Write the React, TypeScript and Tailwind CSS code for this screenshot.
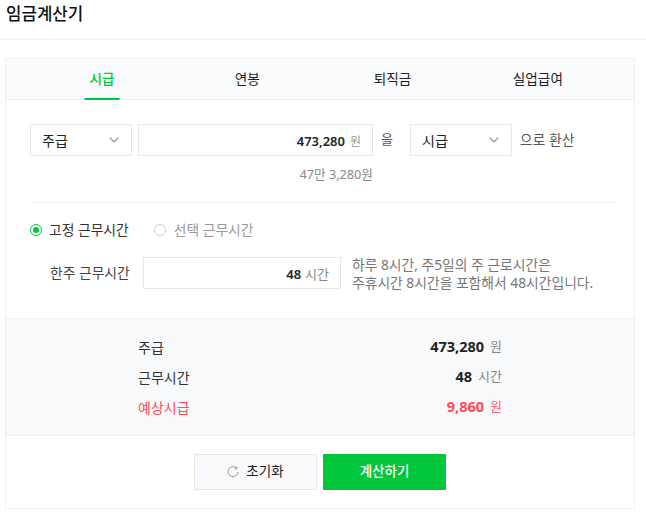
import React from 'react';

const font = 'font-["Noto_Sans","Noto_Sans_CJK_KR",sans-serif]';

const Chevron: React.FC = () => (
  <svg width="10" height="6" viewBox="0 0 10 6" fill="none" stroke="#8b8b8b" strokeWidth="1.2">
    <path d="M0.8 0.6 L5 4.8 L9.2 0.6" />
  </svg>
);

const SelectBox: React.FC<{ label: string }> = ({ label }) => (
  <div className="flex h-8 w-[102px] shrink-0 items-center justify-between border border-[#e4e7ec] bg-white pl-[11px] pr-3">
    <span className="text-[14px] text-[#222]">{label}</span>
    <Chevron />
  </div>
);

const tabs = ['시급', '연봉', '퇴직금', '실업급여'];

const SummaryRow: React.FC<{ label: string; value: string; unit: string; red?: boolean }> = ({ label, value, unit, red }) => (
  <div className="flex h-[30px] items-center justify-between">
    <span className={`mt-[2px] text-[14px] ${red ? 'text-[#ff4b55]' : 'text-[#333]'}`}>{label}</span>
    <span className="mt-[1px] flex items-center gap-[6px]">
      <b className={`text-[14.5px] font-bold ${red ? 'text-[#ff4b55]' : 'text-[#222]'}`}>{value}</b>
      <span className={`text-[13px] ${red ? 'text-[#ff6a72]' : 'text-[#888]'}`}>{unit}</span>
    </span>
  </div>
);

export default function App() {
  return (
    <div className={`${font} h-[517px] w-[646px] overflow-hidden bg-white`}>
      <div className="flex h-10 items-start border-b border-[#f0f0f0] pl-[6px] pt-[2px]">
        <h1 className="text-[16.8px] font-medium leading-6 text-[#111]">임금계산기</h1>
      </div>

      <div className="ml-[5px] mt-[18px] w-[630px] border border-[#eef0f3]">
        {/* tabs */}
        <div className="grid h-[41px] grid-cols-4 border-b border-[#e9ecf0] bg-[#fafbfd] pl-[23px] pr-6">
          {tabs.map((t, i) => (
            <div key={t} className="relative flex items-center justify-center pl-[1px] pt-[1px]">
              <span className={`text-[13.6px] ${i === 0 ? 'font-medium text-[#00c73c]' : 'text-[#222]'}`}>{t}</span>
              {i === 0 && <span className="absolute bottom-[-1px] left-1/2 h-[2px] w-[35px] -translate-x-1/2 bg-[#00c73c]" />}
            </div>
          ))}
        </div>

        {/* conversion form */}
        <div className="pl-6 pr-5 pt-6">
          <div className="flex items-center">
            <SelectBox label="주급" />
            <div className="ml-[6px] flex h-8 w-[235px] items-center justify-end border border-[#e4e7ec] pr-[11px] pt-[3px]">
              <b className="text-[13px] font-semibold text-[#222]">473,280</b>
              <span className="ml-[5px] text-[12px] text-[#999]">원</span>
            </div>
            <span className="ml-2 w-[29px] text-[13px] text-[#555]">을</span>
            <SelectBox label="시급" />
            <span className="ml-2 text-[13.5px] tracking-[0.3px] text-[#555]">으로 환산</span>
          </div>
          <div className="ml-[108px] mt-[8px] w-[235px] text-right text-[12.7px] leading-5 text-[#888]">47만 3,280원</div>
          <div className="mt-[18px] border-t border-[#f0f1f3]" />

          {/* working hours */}
          <div className="mt-[16px] flex h-[22px] items-center">
            <span className="flex h-3 w-3 items-center justify-center rounded-full border-[1.5px] border-[#00c73c]">
              <span className="h-[6px] w-[6px] rounded-full bg-[#00c73c]" />
            </span>
            <span className="ml-[7px] text-[13.8px] text-[#333]">고정 근무시간</span>
            <span className="ml-[25px] h-3 w-3 rounded-full border border-[#ccc]" />
            <span className="ml-[8px] text-[13.8px] text-[#999]">선택 근무시간</span>
          </div>
          <div className="mt-4 flex items-start">
            <span className="ml-5 w-[93px] self-center pb-[2px] text-[13.8px] text-[#444]">한주 근무시간</span>
            <div className="flex h-8 w-[198px] items-center justify-end border border-[#e4e7ec] pr-[11px] pt-[3px]">
              <b className="text-[13px] font-semibold text-[#222]">48</b>
              <span className="ml-1 text-[13px] text-[#888]">시간</span>
            </div>
            <p className="-mt-[1px] ml-[11px] text-[13.8px] leading-[18px] text-[#777]">
              하루 8시간, 주5일의 주 근로시간은
              <br />
              주휴시간 8시간을 포함해서 48시간입니다.
            </p>
          </div>
        </div>

        {/* result */}
        <div className="mt-[26px] h-[118px] border-y border-[#f0f1f3] bg-[#f8f9fb] pl-[132px] pr-[132px] pt-[12px]">
          <SummaryRow label="주급" value="473,280" unit="원" />
          <SummaryRow label="근무시간" value="48" unit="시간" />
          <SummaryRow label="예상시급" value="9,860" unit="원" red />
        </div>

        {/* buttons */}
        <div className="flex h-[72px] items-center justify-center gap-[6px] pb-[1px]">
          <button className="flex h-9 w-[123px] items-center justify-center gap-[7px] border border-[#e4e7ec] bg-[#f8f9fb] text-[13.5px] text-[#222]">
            <svg width="12" height="12" viewBox="0 0 12 12" fill="none" stroke="#999" strokeWidth="1">
              <path d="M9.6 2.2 A5 5 0 1 0 11 6" />
              <path d="M10 0.4 V2.8 H7.6" />
            </svg>
            초기화
          </button>
          <button className="h-9 w-[123px] bg-[#00c73c] text-[13.5px] font-medium text-white">계산하기</button>
        </div>
      </div>
    </div>
  );
}
